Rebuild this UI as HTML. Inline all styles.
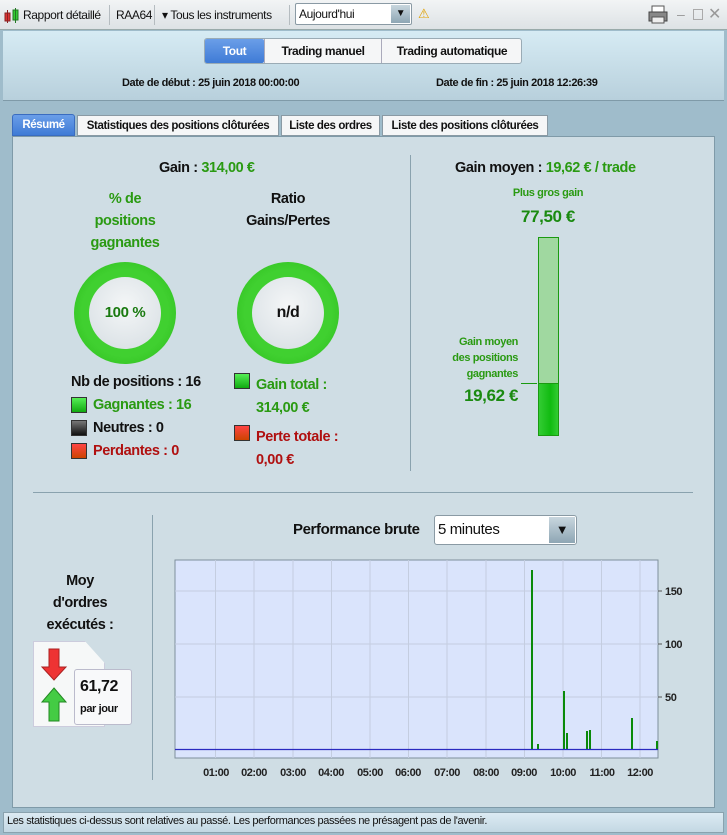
<!DOCTYPE html>
<html><head><meta charset="utf-8"><style>
*{margin:0;padding:0;box-sizing:border-box}
body{width:727px;height:835px;overflow:hidden;font-family:"Liberation Sans",sans-serif;background:#9fbccb;position:relative;letter-spacing:-0.4px;color:#111}
.a{position:absolute;white-space:nowrap}
.g{color:#2a9a12}.r{color:#b01010}
.sq{position:absolute;width:16px;height:16px;border:1px solid #333}
</style></head><body>
<!-- toolbar -->
<div class="a" style="left:0;top:0;width:727px;height:30px;background:linear-gradient(#f2f4f5,#dde2e5);border-bottom:1px solid #9aa"></div>
<svg class="a" style="left:4px;top:8px" width="16" height="16"><rect x="1" y="5" width="5" height="8" fill="#d33" stroke="#822"/><line x1="3.5" y1="2" x2="3.5" y2="15" stroke="#822"/><rect x="9" y="2" width="5" height="10" fill="#3c3" stroke="#272"/><line x1="11.5" y1="0" x2="11.5" y2="15" stroke="#272"/></svg>
<div class="a" style="left:23px;top:8px;font-size:12px">Rapport détaillé</div>
<div class="a" style="left:109px;top:5px;width:1px;height:20px;background:#b5bcc0"></div>
<div class="a" style="left:116px;top:8px;font-size:12px">RAA64</div>
<div class="a" style="left:154px;top:5px;width:1px;height:20px;background:#b5bcc0"></div>
<div class="a" style="left:162px;top:8px;font-size:12px">▾ Tous les instruments</div>
<div class="a" style="left:289px;top:5px;width:1px;height:20px;background:#b5bcc0"></div>
<div class="a" style="left:295px;top:3px;width:117px;height:22px;background:#fff;border:1px solid #8a9aa4;border-radius:2px"></div>
<div class="a" style="left:299px;top:7px;font-size:12px">Aujourd'hui</div>
<div class="a" style="left:391px;top:5px;width:19px;height:18px;background:linear-gradient(#c8d6de,#8ea6b4);font-size:10px;text-align:center;line-height:18px">▼</div>
<div class="a" style="left:418px;top:6px;font-size:13px;color:#e0a000">⚠</div>
<svg class="a" style="left:648px;top:5px" width="22" height="20"><rect x="4" y="1" width="12" height="6" fill="#fff" stroke="#555"/><rect x="1" y="7" width="18" height="9" fill="#888" stroke="#444"/><rect x="4" y="12" width="12" height="6" fill="#eee" stroke="#555"/></svg>
<div class="a" style="left:677px;top:6px;font-size:14px;color:#999">–</div>
<div class="a" style="left:693px;top:9px;width:10px;height:11px;border:1px solid #aaa"></div>
<div class="a" style="left:708px;top:4px;font-size:16px;color:#999">✕</div>
<!-- header -->
<div class="a" style="left:3px;top:31px;width:721px;height:70px;background:linear-gradient(#d6ebf4,#b8d0dc);border-bottom:1px solid #7f9aa8"></div>
<div class="a" style="left:204px;top:38px;width:318px;height:26px;border:1px solid #9aabb5;border-radius:3px;background:#f5f6f7;font-size:12px;font-weight:bold">
<div class="a" style="left:0;top:0;width:59px;height:24px;background:linear-gradient(#6a9ee8,#3f7bd6);color:#fff;text-align:center;line-height:24px;border-radius:2px">Tout</div>
<div class="a" style="left:59px;top:0;width:117px;height:24px;text-align:center;line-height:24px;border-left:1px solid #aab">Trading manuel</div>
<div class="a" style="left:176px;top:0;width:141px;height:24px;text-align:center;line-height:24px;border-left:1px solid #aab">Trading automatique</div>
</div>
<div class="a" style="left:122px;top:77px;font-size:11px;font-weight:bold">Date de début :  25 juin 2018 00:00:00</div>
<div class="a" style="left:436px;top:77px;font-size:11px;font-weight:bold">Date de fin :  25 juin 2018 12:26:39</div>
<!-- tabs -->
<div class="a" style="left:12px;top:114px;width:63px;height:22px;background:linear-gradient(#6a9ee8,#3f7bd6);color:#fff;font-size:11.5px;font-weight:bold;text-align:center;line-height:21px;border-radius:3px 3px 0 0;border:1px solid #3a6cc0">Résumé</div>
<div class="a" style="left:77px;top:115px;width:202px;height:21px;background:#f5f6f7;border:1px solid #8a9aa4;font-size:11.5px;font-weight:bold;text-align:center;line-height:20px">Statistiques des positions clôturées</div>
<div class="a" style="left:281px;top:115px;width:99px;height:21px;background:#f5f6f7;border:1px solid #8a9aa4;font-size:11.5px;font-weight:bold;text-align:center;line-height:20px">Liste des ordres</div>
<div class="a" style="left:382px;top:115px;width:166px;height:21px;background:#f5f6f7;border:1px solid #8a9aa4;font-size:11.5px;font-weight:bold;text-align:center;line-height:20px">Liste des positions clôturées</div>
<!-- content panel -->
<div class="a" style="left:12px;top:136px;width:703px;height:672px;background:#cfdde4;border:1px solid #7f9aa8"></div>
<div class="a" style="left:159px;top:160px;font-size:14.5px;font-weight:bold">Gain : <span class="g">314,00 €</span></div>
<div class="a" style="left:75px;top:188px;width:100px;text-align:center;font-size:14.5px;font-weight:bold;line-height:22px" class="g"><span class="g">% de<br>positions<br>gagnantes</span></div>
<div class="a" style="left:238px;top:188px;width:100px;text-align:center;font-size:14.5px;font-weight:bold;line-height:22px">Ratio<br>Gains/Pertes</div>
<div class="a" style="left:74px;top:262px;width:102px;height:102px;border-radius:50%;background:radial-gradient(circle,#40d030 60%,#28b818 100%)"></div>
<div class="a" style="left:89px;top:277px;width:72px;height:72px;border-radius:50%;background:radial-gradient(circle at 50% 40%,#f4f6f7,#d5dde2);text-align:center;line-height:72px;font-size:15px;font-weight:bold;color:#1a7a10">100 %</div>
<div class="a" style="left:237px;top:262px;width:102px;height:102px;border-radius:50%;background:radial-gradient(circle,#40d030 60%,#28b818 100%)"></div>
<div class="a" style="left:252px;top:277px;width:72px;height:72px;border-radius:50%;background:radial-gradient(circle at 50% 40%,#f4f6f7,#d5dde2);text-align:center;line-height:72px;font-size:16px;font-weight:bold">n/d</div>
<div class="a" style="left:71px;top:374px;font-size:14.5px;font-weight:bold">Nb de positions : 16</div>
<div class="sq" style="left:71px;top:397px;background:linear-gradient(#5e5,#1a1)"></div>
<div class="a g" style="left:93px;top:397px;font-size:14.5px;font-weight:bold">Gagnantes : 16</div>
<div class="sq" style="left:71px;top:420px;background:linear-gradient(#777,#111)"></div>
<div class="a" style="left:93px;top:420px;font-size:14.5px;font-weight:bold">Neutres : 0</div>
<div class="sq" style="left:71px;top:443px;background:linear-gradient(#f44,#c40)"></div>
<div class="a r" style="left:93px;top:443px;font-size:14.5px;font-weight:bold">Perdantes : 0</div>
<div class="sq" style="left:234px;top:373px;background:linear-gradient(#5e5,#1a1)"></div>
<div class="a g" style="left:256px;top:374px;font-size:14.5px;font-weight:bold;line-height:23px">Gain total :<br>314,00 €</div>
<div class="sq" style="left:234px;top:425px;background:linear-gradient(#f44,#c40)"></div>
<div class="a r" style="left:256px;top:426px;font-size:14.5px;font-weight:bold;line-height:23px">Perte totale :<br>0,00 €</div>
<div class="a" style="left:410px;top:155px;width:1px;height:316px;background:#8aa2ae"></div>
<div class="a" style="left:455px;top:160px;font-size:14.5px;font-weight:bold">Gain moyen : <span class="g">19,62 € / trade</span></div>
<div class="a g" style="left:498px;top:187px;width:100px;text-align:center;font-size:11px;font-weight:bold">Plus gros gain</div>
<div class="a g" style="left:498px;top:207px;width:100px;text-align:center;font-size:17px;font-weight:bold;color:#1a8a10">77,50 €</div>
<div class="a" style="left:538px;top:237px;width:21px;height:199px;background:#a0d8a0;border:1px solid #1a9a10"></div>
<div class="a" style="left:538px;top:383px;width:21px;height:53px;background:linear-gradient(90deg,#3c3,#1b1 60%,#3c3);border:1px solid #1a9a10"></div>
<div class="a" style="left:521px;top:383px;width:16px;height:1px;background:#1a9a10"></div>
<div class="a g" style="left:430px;top:334px;width:88px;text-align:right;font-size:11px;font-weight:bold;line-height:16px">Gain moyen<br>des positions<br>gagnantes</div>
<div class="a" style="left:430px;top:386px;width:88px;text-align:right;font-size:17px;font-weight:bold;color:#1a8a10">19,62 €</div>
<div class="a" style="left:33px;top:492px;width:660px;height:1px;background:#8aa2ae"></div>
<!-- bottom -->
<div class="a" style="left:152px;top:515px;width:1px;height:265px;background:#8aa2ae"></div>
<div class="a" style="left:30px;top:570px;width:100px;text-align:center;font-size:14.5px;font-weight:bold;line-height:22px">Moy<br>d'ordres<br>exécutés :</div>
<div class="a" style="left:33px;top:641px;width:72px;height:86px;background:#f6f8f8;border:1px solid #ccd;clip-path:polygon(0 0,72% 0,100% 26%,100% 100%,0 100%)"></div>
<svg class="a" style="left:40px;top:647px" width="30" height="80"><path d="M9 2h10v18h7L14 33 2 20h7z" fill="#e33" stroke="#a22"/><path d="M14 41l12 14h-7v19H9V55H2z" fill="#4c4" stroke="#282"/></svg>
<div class="a" style="left:74px;top:669px;width:58px;height:56px;background:#f8f9fa;border:1px solid #bbc;border-radius:3px"></div>
<div class="a" style="left:80px;top:678px;font-size:16px;font-weight:bold">61,72</div>
<div class="a" style="left:80px;top:703px;font-size:11px;font-weight:bold">par jour</div>
<div class="a" style="left:293px;top:521px;font-size:15px;font-weight:bold">Performance brute</div>
<div class="a" style="left:434px;top:515px;width:143px;height:30px;background:#fff;border:1px solid #8a9aa4;border-radius:3px"></div>
<div class="a" style="left:438px;top:521px;font-size:15px">5 minutes</div>
<div class="a" style="left:549px;top:517px;width:26px;height:26px;background:linear-gradient(#c8d6de,#8ea6b4);text-align:center;line-height:26px;font-size:13px">▼</div>
<svg class="a" style="left:0;top:0" width="727" height="835" font-family="Liberation Sans" font-size="11" font-weight="bold">
<rect x="175" y="560" width="483" height="198" fill="#dae4fc" stroke="#7f8f9c"/>
<g stroke="#c4cde0" stroke-width="1">
<line x1="215.5" y1="560" x2="215.5" y2="758"/><line x1="254" y1="560" x2="254" y2="758"/><line x1="293" y1="560" x2="293" y2="758"/><line x1="331.5" y1="560" x2="331.5" y2="758"/><line x1="370" y1="560" x2="370" y2="758"/><line x1="408.5" y1="560" x2="408.5" y2="758"/><line x1="447" y1="560" x2="447" y2="758"/><line x1="486" y1="560" x2="486" y2="758"/><line x1="524.5" y1="560" x2="524.5" y2="758"/><line x1="563" y1="560" x2="563" y2="758"/><line x1="601.5" y1="560" x2="601.5" y2="758"/><line x1="640" y1="560" x2="640" y2="758"/>
<line x1="175" y1="591" x2="658" y2="591"/><line x1="175" y1="644" x2="658" y2="644"/><line x1="175" y1="697" x2="658" y2="697"/>
</g>
<g fill="#0a8a0a">
<rect x="531" y="570" width="2" height="179"/><rect x="537" y="744" width="2" height="5"/><rect x="563" y="691" width="2" height="58"/><rect x="566" y="733" width="2" height="16"/><rect x="586" y="731" width="2" height="18"/><rect x="589" y="730" width="2" height="19"/><rect x="631" y="718" width="2" height="31"/><rect x="656" y="741" width="2" height="8"/>
</g>
<line x1="175" y1="749.5" x2="658" y2="749.5" stroke="#2a2ac0" stroke-width="1.2"/>
<g stroke="#555"><line x1="658" y1="591" x2="662" y2="591"/><line x1="658" y1="644" x2="662" y2="644"/><line x1="658" y1="697" x2="662" y2="697"/></g>
<g fill="#222"><text x="665" y="595">150</text><text x="665" y="648">100</text><text x="665" y="701">50</text></g>
<g fill="#222" text-anchor="middle" letter-spacing="-0.5">
<text x="216" y="776">01:00</text><text x="254" y="776">02:00</text><text x="293" y="776">03:00</text><text x="331" y="776">04:00</text><text x="370" y="776">05:00</text><text x="408" y="776">06:00</text><text x="447" y="776">07:00</text><text x="486" y="776">08:00</text><text x="524" y="776">09:00</text><text x="563" y="776">10:00</text><text x="602" y="776">11:00</text><text x="640" y="776">12:00</text>
</g>
</svg>
<!-- status -->
<div class="a" style="left:3px;top:812px;width:721px;height:21px;background:linear-gradient(#dcebf3,#c3d8e3);border:1px solid #8aa2ae"></div>
<div class="a" style="left:7px;top:815px;font-size:11px">Les statistiques ci-dessus sont relatives au passé. Les performances passées ne présagent pas de l'avenir.</div>
</body></html>
